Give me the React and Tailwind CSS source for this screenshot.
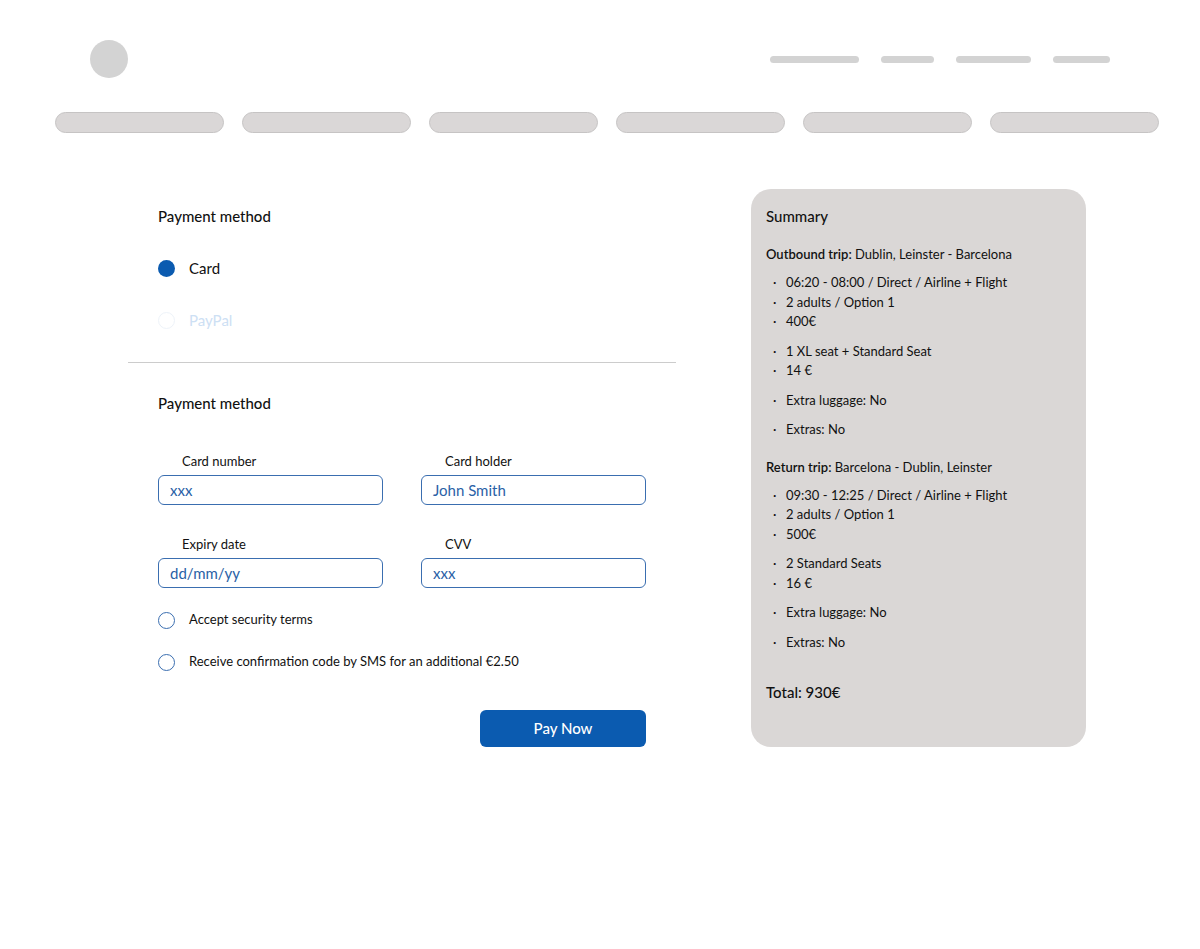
import React, { useState } from 'react';

const NAV = [89, 53, 75, 57];
const TABS = [0, 1, 2, 3, 4, 5];

const outbound = [
  ['06:20 - 08:00 / Direct / Airline + Flight', '2 adults / Option 1', '400€'],
  ['1 XL seat + Standard Seat', '14 €'],
  ['Extra luggage: No'],
  ['Extras: No'],
];

const inbound = [
  ['09:30 - 12:25 / Direct / Airline + Flight', '2 adults / Option 1', '500€'],
  ['2 Standard Seats', '16 €'],
  ['Extra luggage: No'],
  ['Extras: No'],
];

const Field = ({ label, value }) => (
  <div className="w-[225px]">
    <div className="pl-[24px] text-[13px] leading-[16px] text-[#111]">{label}</div>
    <div className="mt-[6px] h-[30px] rounded-[6px] border border-[#3a6eb0] px-[11px] flex items-center text-[15px] text-[#2a61a6]">
      {value}
    </div>
  </div>
);

const Bullets = ({ groups }) => (
  <div className="mt-[10px] flex flex-col gap-[10px]">
    {groups.map((g, i) => (
      <div key={i}>
        {g.map(line => (
          <div key={line} className="flex text-[13px] leading-[19.5px] text-[#111]">
            <span className="w-[20px] pl-[7px]">·</span>
            <span>{line}</span>
          </div>
        ))}
      </div>
    ))}
  </div>
);

export default function App() {
  const [method, setMethod] = useState('card');

  return (
    <div className="min-h-[949px] bg-white font-['Lato',sans-serif] text-[#111]">
      <header className="pt-[40px] px-[90px] flex items-center justify-between">
        <div className="w-[38px] h-[38px] rounded-full bg-[#d3d3d3]" />
        <nav className="flex gap-[22px]">
          {NAV.map((w, i) => (
            <div key={i} className="h-[7px] rounded-full bg-[#d3d3d3]" style={{ width: w }} />
          ))}
        </nav>
      </header>

      <div className="mt-[34px] pl-[55px] flex gap-[18px]">
        {TABS.map(t => (
          <div key={t} className="w-[169px] h-[21px] rounded-full bg-[#dad7d7] border border-[#c6c4c4]" />
        ))}
      </div>

      <main className="mt-[56px] flex">
        <section className="ml-[128px] w-[548px]">
          <div className="px-[30px]">
            <h2 className="pt-[17px] text-[15px] leading-[20px] font-medium">Payment method</h2>
            <button className="mt-[32px] flex items-center h-[20px]" onClick={() => setMethod('card')}>
              <span className="w-[17px] h-[17px] rounded-full bg-[#0b5bb0]" />
              <span className="ml-[14px] text-[15px]">Card</span>
            </button>
            <button className="mt-[32px] flex items-center h-[20px]" onClick={() => setMethod('paypal')}>
              <span className="w-[17px] h-[17px] rounded-full border border-[#eef3f9]" />
              <span className="ml-[14px] text-[15px] text-[#cde0f4]">PayPal</span>
            </button>
          </div>
          <div className="mt-[32px] h-px bg-[#cccccc]" />
          <div className="px-[30px]">
            <h2 className="mt-[30px] text-[15px] leading-[20px] font-medium">Payment method</h2>
            <div className="mt-[40px] flex gap-[38px]">
              <Field label="Card number" value="xxx" />
              <Field label="Card holder" value="John Smith" />
            </div>
            <div className="mt-[31px] flex gap-[38px]">
              <Field label="Expiry date" value="dd/mm/yy" />
              <Field label="CVV" value="xxx" />
            </div>
            <div className="mt-[23px] flex items-center h-[18px]">
              <span className="w-[17px] h-[17px] rounded-full border border-[#3a6eb0]" />
              <span className="ml-[14px] text-[13px]">Accept security terms</span>
            </div>
            <div className="mt-[24px] flex items-center h-[18px]">
              <span className="w-[17px] h-[17px] rounded-full border border-[#3a6eb0]" />
              <span className="ml-[14px] text-[13px]">Receive confirmation code by SMS for an additional €2.50</span>
            </div>
            <div className="mt-[39px] w-[488px] flex justify-end">
              <button className="w-[166px] h-[37px] rounded-[6px] bg-[#0b5bb0] text-white text-[15px] font-medium">Pay Now</button>
            </div>
          </div>
        </section>

        <aside className="ml-[75px] w-[335px] h-[558px] rounded-[20px] bg-[#dad7d6] px-[15px] pt-[17px]">
          <h2 className="text-[15px] leading-[20px] font-medium">Summary</h2>
          <p className="mt-[19px] text-[13px] leading-[18px]">
            <span className="font-semibold">Outbound trip:</span> Dublin, Leinster - Barcelona
          </p>
          <Bullets groups={outbound} />
          <p className="mt-[18px] text-[13px] leading-[18px]">
            <span className="font-semibold">Return trip:</span> Barcelona - Dublin, Leinster
          </p>
          <Bullets groups={inbound} />
          <p className="mt-[30px] text-[15px] leading-[20px] font-medium">Total: 930€</p>
        </aside>
      </main>
    </div>
  );
}
